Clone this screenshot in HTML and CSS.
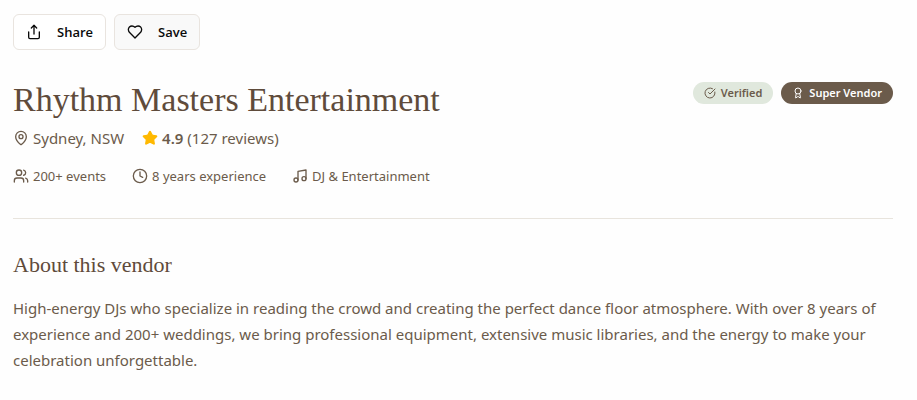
FILE: index.html
```html
<!DOCTYPE html>
<html lang="en">
<head>
<meta charset="utf-8">
<meta name="viewport" content="width=device-width, initial-scale=1">
<title>Rhythm Masters Entertainment</title>
<link rel="stylesheet" href="styles.css">
</head>
<body>
<main class="vendor">
  <div class="actions">
    <button class="btn" type="button">
      <svg class="icon" viewBox="0 0 24 24" aria-hidden="true"><path d="M4 12v8a2 2 0 0 0 2 2h12a2 2 0 0 0 2-2v-8"/><path d="m16 6-4-4-4 4"/><path d="M12 2v13"/></svg>
      Share
    </button>
    <button class="btn btn-active" type="button">
      <svg class="icon" viewBox="0 0 24 24" aria-hidden="true"><path d="M19 14c1.49-1.46 3-3.21 3-5.5A5.5 5.5 0 0 0 16.5 3c-1.76 0-3 .5-4.5 2-1.5-1.5-2.74-2-4.5-2A5.5 5.5 0 0 0 2 8.500c0 2.300 1.500 4.050 3 5.500l7 7Z"/></svg>
      Save
    </button>
  </div>

  <header class="summary">
    <div class="heading">
      <h1>Rhythm Masters Entertainment</h1>
      <div class="badges">
        <span class="badge badge-verified">
          <svg class="icon" viewBox="0 0 24 24" aria-hidden="true"><path d="M21.801 10A10 10 0 1 1 17 3.335"/><path d="m9 11 3 3L22 4"/></svg>
          Verified
        </span>
        <span class="badge badge-super">
          <svg class="icon" viewBox="0 0 24 24" aria-hidden="true"><path d="m15.477 12.890 1.515 8.526a.5.5 0 0 1-.810.470l-3.580-2.687a1 1 0 0 0-1.197 0l-3.586 2.686a.5.5 0 0 1-.810-.469l1.514-8.526"/><circle cx="12" cy="8" r="6"/></svg>
          Super Vendor
        </span>
      </div>
    </div>
    <div class="meta">
      <span class="item">
        <svg class="icon" viewBox="0 0 24 24" aria-hidden="true"><path d="M20 10c0 4.993-5.539 10.193-7.399 11.799a1 1 0 0 1-1.202 0C9.539 20.193 4 14.993 4 10a8 8 0 0 1 16 0"/><circle cx="12" cy="10" r="3"/></svg>
        Sydney, NSW
      </span>
      <span class="item">
        <svg class="icon star" viewBox="0 0 24 24" aria-hidden="true"><path d="M11.525 2.295a.53.53 0 0 1 .950 0l2.310 4.679a2.123 2.123 0 0 0 1.595 1.160l5.166.756a.53.53 0 0 1 .294.904l-3.736 3.638a2.123 2.123 0 0 0-.611 1.878l.882 5.140a.53.53 0 0 1-.771.560l-4.618-2.428a2.122 2.122 0 0 0-1.973 0L6.396 21.010a.53.53 0 0 1-.770-.560l.881-5.139a2.122 2.122 0 0 0-.611-1.879L2.160 9.795a.53.53 0 0 1 .294-.906l5.165-.755a2.122 2.122 0 0 0 1.597-1.160z"/></svg>
        <span><strong>4.9</strong> (127 reviews)</span>
      </span>
    </div>
    <ul class="stats">
      <li class="item">
        <svg class="icon" viewBox="0 0 24 24" aria-hidden="true"><path d="M16 21v-2a4 4 0 0 0-4-4H6a4 4 0 0 0-4 4v2"/><circle cx="9" cy="7" r="4"/><path d="M22 21v-2a4 4 0 0 0-3-3.870"/><path d="M16 3.130a4 4 0 0 1 0 7.750"/></svg>
        200+ events
      </li>
      <li class="item">
        <svg class="icon" viewBox="0 0 24 24" aria-hidden="true"><circle cx="12" cy="12" r="10"/><path d="M12 6v6l4 2"/></svg>
        8 years experience
      </li>
      <li class="item">
        <svg class="icon" viewBox="0 0 24 24" aria-hidden="true"><path d="M9 18V5l12-2v13"/><circle cx="6" cy="18" r="3"/><circle cx="18" cy="16" r="3"/></svg>
        DJ &amp; Entertainment
      </li>
    </ul>
  </header>

  <section class="about">
    <h2>About this vendor</h2>
    <p>High-energy DJs who specialize in reading the crowd and creating the perfect dance floor atmosphere. With over 8 years of experience and 200+ weddings, we bring professional equipment, extensive music libraries, and the energy to make your celebration unforgettable.</p>
  </section>
</main>
</body>
</html>
```
FILE: styles.css
```css
* {
  box-sizing: border-box;
}

body {
  margin: 0;
  background: #fefefe;
  color: #6b5b4b;
  font: 15px/24px "Segoe UI", "Noto Sans", "Open Sans", sans-serif;
}

h1,
h2,
p,
ul {
  margin: 0;
  padding: 0;
}

h1,
h2 {
  color: #5f4b3b;
  font-family: Georgia, "Liberation Serif", serif;
  font-weight: 400;
}

h1 {
  font-size: 34px;
  line-height: 36px;
}

h2 {
  font-size: 22px;
  line-height: 28px;
}

.vendor {
  padding: 14px 24px 24px 13px;
}

.icon {
  flex: none;
  width: 16px;
  height: 16px;
  fill: none;
  stroke: currentColor;
  stroke-width: 2;
  stroke-linecap: round;
  stroke-linejoin: round;
}

.actions {
  display: flex;
  gap: 8px;
  margin-bottom: 32px;
}

.btn {
  display: flex;
  align-items: center;
  gap: 15px;
  height: 36px;
  padding: 0 12px;
  border: 1px solid #e9e4df;
  border-radius: 6px;
  background: #fff;
  color: #0a0a0a;
  font: 600 13px/20px "Segoe UI", "Open Sans", "Noto Sans", sans-serif;
}

.btn-active {
  background: #f9f9f9;
}

.summary {
  padding-bottom: 32px;
  border-bottom: 1px solid #e8e4dd;
}

.heading {
  display: flex;
  align-items: flex-start;
  justify-content: space-between;
  gap: 16px;
  margin-bottom: 8px;
}

.badges {
  display: flex;
  gap: 8px;
}

.badge {
  display: flex;
  align-items: center;
  gap: 5px;
  height: 22px;
  padding: 0 11px;
  border-radius: 11px;
  font-size: 11px;
  font-weight: 600;
  line-height: 16px;
  white-space: nowrap;
}

.badge .icon {
  width: 12px;
  height: 12px;
}

.badge-verified {
  background: #e0e8dd;
}

.badge-super {
  background: #6b5b4b;
  color: #fff;
}

.item {
  display: flex;
  align-items: center;
  gap: 4px;
}

.meta {
  display: flex;
  flex-wrap: wrap;
  gap: 18px;
  margin-bottom: 16px;
}

.meta strong {
  font-weight: 600;
}

.star {
  fill: #ffb900;
  stroke: #ffb900;
}

.stats {
  display: flex;
  flex-wrap: wrap;
  gap: 26px;
  font-size: 13px;
  line-height: 20px;
  list-style: none;
}

.about {
  padding-top: 32px;
}

.about h2 {
  margin-bottom: 16px;
}

.about p {
  line-height: 26px;
}
```
